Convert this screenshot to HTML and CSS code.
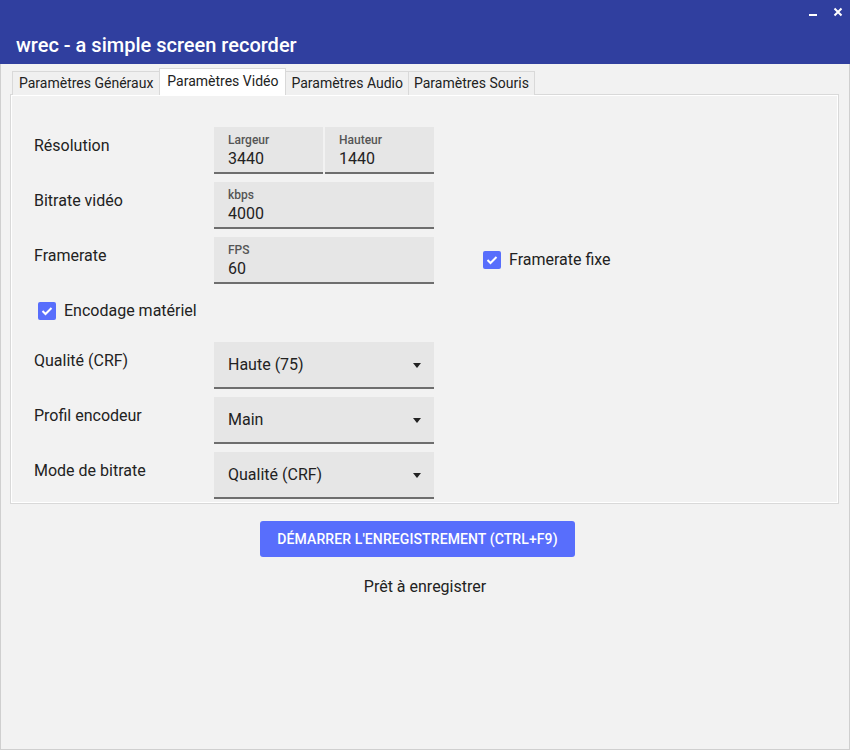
FILE: index.html
```html
<!DOCTYPE html>
<html lang="fr">
<head>
<meta charset="utf-8">
<title>wrec</title>
<link rel="stylesheet" href="styles.css">
</head>
<body>
<div class="window">
  <header class="titlebar">
    <div class="controls">
      <svg class="ctl" width="10" height="10" viewBox="0 0 10 10"><rect x="1" y="7" width="8" height="2" fill="#fff"/></svg>
      <svg class="ctl" width="10" height="10" viewBox="0 0 10 10"><path d="M1.5 1.5 L8.5 8.5 M8.5 1.5 L1.5 8.5" stroke="#fff" stroke-width="2"/></svg>
    </div>
    <h1 class="title">wrec - a simple screen recorder</h1>
  </header>
  <main class="content">
    <nav class="tabs">
      <div class="tab first">Paramètres Généraux</div>
      <div class="tab active">Paramètres Vidéo</div>
      <div class="tab">Paramètres Audio</div>
      <div class="tab">Paramètres Souris</div>
    </nav>
    <section class="panel">
      <div class="row">
        <div class="label">Résolution</div>
        <div class="fields">
          <div class="field half"><span class="flabel">Largeur</span><span class="fvalue">3440</span></div>
          <div class="field half"><span class="flabel">Hauteur</span><span class="fvalue">1440</span></div>
        </div>
      </div>
      <div class="row">
        <div class="label">Bitrate vidéo</div>
        <div class="field"><span class="flabel">kbps</span><span class="fvalue">4000</span></div>
      </div>
      <div class="row">
        <div class="label">Framerate</div>
        <div class="field"><span class="flabel">FPS</span><span class="fvalue">60</span></div>
        <label class="check right"><span class="box"><svg width="12" height="10" viewBox="0 0 12 10"><path d="M1.5 5 L4.5 8 L10.5 2" stroke="#fff" stroke-width="2" fill="none"/></svg></span>Framerate fixe</label>
      </div>
      <div class="checkrow">
        <label class="check"><span class="box"><svg width="12" height="10" viewBox="0 0 12 10"><path d="M1.5 5 L4.5 8 L10.5 2" stroke="#fff" stroke-width="2" fill="none"/></svg></span>Encodage matériel</label>
      </div>
      <div class="row">
        <div class="label">Qualité (CRF)</div>
        <div class="field select"><span class="svalue">Haute (75)</span><span class="arrow"></span></div>
      </div>
      <div class="row">
        <div class="label">Profil encodeur</div>
        <div class="field select"><span class="svalue">Main</span><span class="arrow"></span></div>
      </div>
      <div class="row">
        <div class="label">Mode de bitrate</div>
        <div class="field select"><span class="svalue">Qualité (CRF)</span><span class="arrow"></span></div>
      </div>
    </section>
    <div class="actions">
      <button class="record">Démarrer l'enregistrement (Ctrl+F9)</button>
      <p class="status">Prêt à enregistrer</p>
    </div>
  </main>
</div>
</body>
</html>
```
FILE: styles.css
```css
* { box-sizing: border-box; }
html, body { margin: 0; padding: 0; }
body {
  width: 850px;
  height: 750px;
  overflow: hidden;
  font-family: Roboto, "Liberation Sans", sans-serif;
  color: #222;
  background: #f2f2f2;
}
.window {
  width: 850px;
  height: 750px;
  display: flex;
  flex-direction: column;
}
.titlebar {
  background: #303f9f;
  height: 64px;
  flex: none;
  position: relative;
  color: #fff;
}
.controls {
  position: absolute;
  top: 7px;
  right: 7px;
  display: flex;
  gap: 15px;
}
.ctl { display: block; }
.title {
  margin: 0;
  padding: 33px 0 0 16px;
  font-size: 20px;
  font-weight: 500;
  line-height: 24px;
}
.content {
  flex: 1;
  border-left: 1px solid #cfcfcf;
  border-right: 1px solid #cfcfcf;
  border-bottom: 1px solid #cfcfcf;
  background: #f2f2f2;
  display: flex;
  flex-direction: column;
}
.tabs {
  display: flex;
  align-items: flex-end;
  margin: 4px 0 0 11px;
  height: 26px;
  position: relative;
  z-index: 1;
}
.tab {
  height: 24px;
  margin-bottom: -1px;
  padding: 0 5px;
  font-size: 14px;
  line-height: 22px;
  border: 1px solid #d9d9d9;
  border-bottom: none;
  background: #f0f0f0;
  margin-right: -1px;
  white-space: nowrap;
}
.tab.first { padding: 0 6px; }
.tab.active {
  height: 27px;
  padding: 0 7px;
  background: #fff;
  line-height: 24px;
  margin-bottom: -1px;
  position: relative;
  z-index: 2;
}
.panel {
  margin: 0 10px 0 9px;
  border: 1px solid #d9d9d9;
  box-shadow: inset 0 0 0 1px #fff;
  padding: 32px 0 4px 23px;
  display: flex;
  flex-direction: column;
  gap: 8px;
}
.row {
  display: flex;
  align-items: flex-start;
  height: 47px;
}
.label {
  width: 180px;
  flex: none;
  font-size: 16px;
  line-height: 20px;
  padding-top: 9px;
}
.fields { display: flex; gap: 2px; }
.field {
  width: 220px;
  height: 47px;
  background: #e6e6e6;
  border-bottom: 2px solid #6e6e6e;
  padding: 5px 0 0 14px;
  display: flex;
  flex-direction: column;
}
.field.half { width: 109px; }
.flabel {
  font-size: 12px;
  line-height: 16px;
  color: #555;
  font-weight: 500;
}
.fvalue {
  font-size: 16px;
  line-height: 20px;
  margin-top: 1px;
  color: #222;
}
.field.select {
  flex-direction: row;
  align-items: center;
  padding: 0 13px 0 14px;
  justify-content: space-between;
}
.svalue { font-size: 16px; line-height: 20px; }
.arrow {
  width: 0;
  height: 0;
  border-left: 4.5px solid transparent;
  border-right: 4.5px solid transparent;
  border-top: 5px solid #222;
  margin-top: 1px;
}
.check {
  display: flex;
  align-items: center;
  font-size: 16px;
  line-height: 20px;
  gap: 8px;
}
.check.right {
  margin: 13px 0 0 49px;
}
.box {
  width: 18px;
  height: 18px;
  border-radius: 2px;
  background: #586efc;
  display: flex;
  align-items: center;
  justify-content: center;
}
.checkrow {
  padding-left: 4px;
  margin: 9px 0 13px;
}
.actions {
  display: flex;
  flex-direction: column;
  align-items: center;
}
.record {
  margin: 17px 15px 0 0;
  width: 315px;
  height: 36px;
  border: none;
  border-radius: 3px;
  background: #586efc;
  color: #fff;
  font-family: Roboto, "Liberation Sans", sans-serif;
  font-size: 14px;
  font-weight: 500;
  text-transform: uppercase;
  letter-spacing: 0.1px;
}
.status {
  margin: 20px 0 0;
  font-size: 16px;
  line-height: 20px;
}
```
